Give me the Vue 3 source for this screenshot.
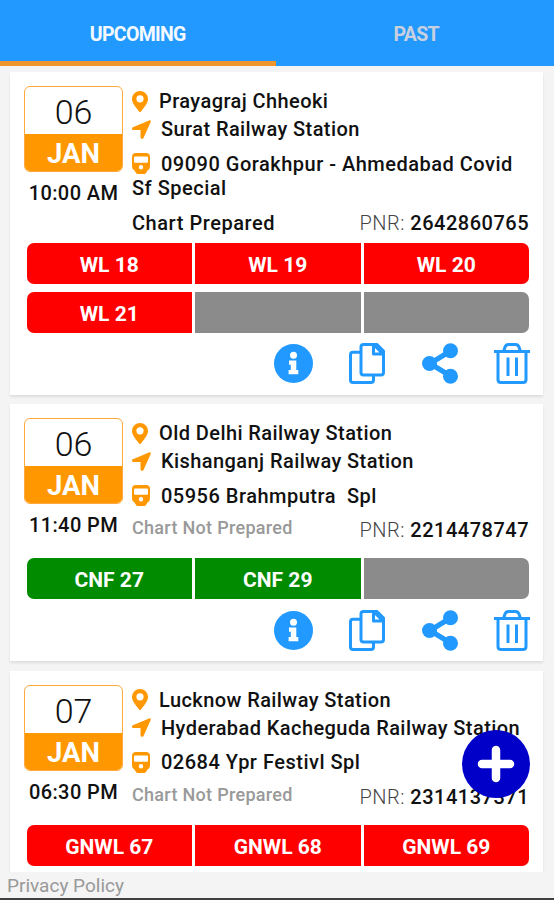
<script setup>
import { ref } from 'vue'

const activeTab = ref('upcoming')

const tabs = [
  { id: 'upcoming', label: 'UPCOMING' },
  { id: 'past', label: 'PAST' }
]

const trips = [
  {
    day: '06',
    month: 'JAN',
    time: '10:00 AM',
    from: 'Prayagraj Chheoki',
    to: 'Surat Railway Station',
    train: '09090 Gorakhpur - Ahmedabad Covid Sf Special',
    prepared: true,
    pnr: '2642860765',
    status: 'waiting',
    seats: ['WL 18', 'WL 19', 'WL 20', 'WL 21', '', '']
  },
  {
    day: '06',
    month: 'JAN',
    time: '11:40 PM',
    from: 'Old Delhi Railway Station',
    to: 'Kishanganj Railway Station',
    train: '05956 Brahmputra  Spl',
    prepared: false,
    pnr: '2214478747',
    status: 'confirmed',
    seats: ['CNF 27', 'CNF 29', '']
  },
  {
    day: '07',
    month: 'JAN',
    time: '06:30 PM',
    from: 'Lucknow Railway Station',
    to: 'Hyderabad Kacheguda Railway Station',
    train: '02684 Ypr Festivl Spl',
    prepared: false,
    pnr: '2314137371',
    status: 'waiting',
    seats: ['GNWL 67', 'GNWL 68', 'GNWL 69']
  }
]
</script>

<template>
  <div class="app">
    <nav class="tabs">
      <button
        v-for="tab in tabs"
        :key="tab.id"
        class="tab"
        :class="{ 'tab--active': tab.id === activeTab }"
        @click="activeTab = tab.id"
      >{{ tab.label }}</button>
    </nav>

    <main class="list">
      <article v-for="trip in trips" :key="trip.pnr" class="card">
        <div class="info">
          <div class="when">
            <div class="date">
              <div class="date__day">{{ trip.day }}</div>
              <div class="date__month">{{ trip.month }}</div>
            </div>
            <div class="time">{{ trip.time }}</div>
          </div>

          <div class="route">
            <div class="place">
              <svg class="pin" viewBox="0 0 16 21">
                <path fill-rule="evenodd" d="M8 0a8 8 0 0 1 8 8c0 3.500-2.300 6.200-7 12.500q-1 1-2 0C2.300 14.200 0 11.500 0 8a8 8 0 0 1 8-8zm0 4.200a3.600 3.600 0 1 0 0 7.200 3.600 3.600 0 0 0 0-7.200z" />
              </svg>
              <span>{{ trip.from }}</span>
            </div>
            <div class="place place--to">
              <svg class="arrow" viewBox="0 0 19 19">
                <path d="M17 .4.900 7.300C-.400 8-.200 9.900 1.300 10.100H8.500v7.200c.2 1.700 2.300 2 3 .6L18.700 2c.400-1.200-.5-2.100-1.700-1.600z" />
              </svg>
              <span>{{ trip.to }}</span>
            </div>
            <div class="train">
              <svg class="subway" viewBox="0 0 18 21">
                <path fill-rule="evenodd" d="M4 0h10q4 0 4 4v9.500q0 3-2.500 4l-1.500 2.500q-.6 1-1.800 1H5.800q-1.200 0-1.800-1l-1.500-2.500Q0 16.500 0 13.500V4q0-4 4-4zM3 3.500q-1 0-1 1v4.300q0 1 1 1h12q1 0 1-1V4.500q0-1-1-1zM9 12a2.200 2.200 0 1 0 0 4.400A2.200 2.200 0 0 0 9 12z" />
              </svg>
              <span class="train__name">{{ trip.train }}</span>
            </div>
            <div class="chart">
              <span v-if="trip.prepared" class="chart__done">Chart Prepared</span>
              <span v-else class="chart__pending">Chart Not Prepared</span>
              <span class="pnr"><span class="pnr__label">PNR: </span>{{ trip.pnr }}</span>
            </div>
          </div>
        </div>

        <div class="seats">
          <div
            v-for="(seat, i) in trip.seats"
            :key="i"
            class="seat"
            :class="seat ? `seat--${trip.status}` : 'seat--empty'"
          >{{ seat }}</div>
        </div>

        <div class="actions">
          <svg class="icon icon--info" viewBox="0 0 39 39">
            <circle cx="19.500" cy="19.500" r="19.500" />
            <circle class="icon__cut" cx="19.500" cy="11.300" r="3.500" />
            <path class="icon__cut" d="M15 16.500h7.300v9.500h2v4.200H14.600V26h2.200v-5.300H15z" />
          </svg>
          <svg class="icon icon--copy" viewBox="0 0 36 41">
            <path d="M11.500 9.300H4q-2.500 0-2.500 2.500v25.200q0 2.500 2.500 2.500h18q2.500 0 2.500-2.500v-4.500" />
            <path d="M14.500 1.500h13.500l6.500 6.500v21.500q0 2.500-2.500 2.500H14.500q-2.500 0-2.500-2.500V4q0-2.500 2.500-2.500z" />
            <path d="M24.500 1.500v9.500h10M25.500 2.500l8 8" />
          </svg>
          <svg class="icon icon--share" viewBox="0 0 36 41">
            <path d="M28.500 8 8 20.500 28.500 33" />
            <circle cx="28.500" cy="7.700" r="7.500" />
            <circle cx="7.500" cy="20.500" r="7.500" />
            <circle cx="28.500" cy="33.300" r="7.500" />
          </svg>
          <svg class="icon icon--trash" viewBox="0 0 36 41">
            <path d="M0 8.500h36M9.500 8.500l1.500-4.500q1-2.500 3.500-2.500h7q2.500 0 3.500 2.500l1.500 4.500M4 8.500v28q0 3 3 3h22q3 0 3-3v-28M14 14.500v18.500M22.500 14.500v18.500" />
          </svg>
        </div>
      </article>
    </main>

    <footer class="footer">Privacy Policy</footer>

    <button class="fab" aria-label="Add">
      <svg class="fab__icon" viewBox="0 0 38 38">
        <path d="M19 5v28M5 19h28" />
      </svg>
    </button>
  </div>
</template>

<style>
body {
  margin: 0;
}
</style>

<style scoped>
.app {
  position: relative;
  box-sizing: border-box;
  display: flex;
  flex-direction: column;
  height: 900px;
  overflow: hidden;
  background: #f4f4f4;
  border-bottom: 2px solid #404040;
  color: #111;
  font-family: Roboto, sans-serif;
  font-size: 20px;
  font-weight: 500;
}

.tabs {
  display: flex;
  flex: none;
  height: 66px;
  background: #2199ff;
}

.tab {
  flex: 1;
  padding: 8px 0 0 3px;
  border: none;
  border-bottom: 5px solid transparent;
  background: none;
  color: #c8d0e0;
  font-family: inherit;
  font-size: 19.500px;
  font-weight: 700;
  letter-spacing: -0.700px;
}

.tab--active {
  padding-left: 0;
  border-bottom-color: #ee962b;
  color: #f4f9ff;
}

.list {
  display: flex;
  flex-direction: column;
  gap: 9.500px;
  flex: none;
  box-sizing: border-box;
  height: 806px;
  padding: 6px 11px 0 10px;
  overflow: hidden;
}

.card {
  flex: none;
  padding: 14px 14px 0;
  background: #fff;
  box-shadow: 0 2px 2px #dedede;
}

.info {
  display: flex;
  gap: 9px;
  min-height: 140px;
}

.when {
  flex: none;
  width: 99px;
}

.date {
  box-sizing: border-box;
  height: 86px;
  overflow: hidden;
  border: 1.500px solid #ffa940;
  border-radius: 6px;
  background: #fff;
  text-align: center;
}

.date__day {
  height: 47px;
  font-size: 34px;
  font-weight: 300;
  line-height: 51px;
}

.date__month {
  height: 38px;
  background: #ff9800;
  color: #fff;
  font-size: 27.500px;
  font-weight: 700;
  line-height: 39px;
}

.time {
  margin-top: 9px;
  line-height: 24px;
  text-align: center;
  white-space: nowrap;
  letter-spacing: 0.400px;
}

.route {
  flex: 1;
  min-width: 0;
  padding: 1px 0 8px;
  letter-spacing: 0.420px;
}

.place {
  display: flex;
  align-items: center;
  gap: 11px;
  height: 28px;
  white-space: nowrap;
}

.place--to {
  gap: 10px;
}

.train {
  margin-top: 8.500px;
  line-height: 24.500px;
  letter-spacing: 0.500px;
}

.train__name {
  white-space: pre-wrap;
}

.pin,
.arrow,
.subway {
  flex: none;
  fill: #ff9800;
}

.pin {
  width: 16px;
  height: 21px;
}

.arrow {
  width: 19px;
  height: 19px;
}

.subway {
  width: 18px;
  height: 21px;
  margin-right: 11px;
  vertical-align: -3.500px;
}

.chart {
  display: flex;
  justify-content: space-between;
  height: 24px;
  margin-top: 10px;
  line-height: 24px;
}

.chart__done {
  letter-spacing: 0.550px;
}

.chart__pending {
  margin-top: -2px;
  color: #999;
  font-size: 18px;
  letter-spacing: 0.300px;
}

.pnr {
  letter-spacing: 0.500px;
}

.pnr__label {
  color: #444;
  font-weight: 300;
}

.seats {
  display: grid;
  grid-template-columns: repeat(3, 1fr);
  gap: 8px 3px;
  margin-left: 2.500px;
}

.seat {
  height: 41px;
  color: #fff;
  font-size: 21px;
  font-weight: 700;
  line-height: 44px;
  text-align: center;
}

.seat:nth-child(3n + 1) {
  border-radius: 7px 0 0 7px;
}

.seat:nth-child(3n) {
  border-radius: 0 7px 7px 0;
}

.seat--waiting {
  background: #f00;
}

.seat--confirmed {
  background: #008b00;
}

.seat--empty {
  background: #8b8b8b;
}

.actions {
  display: flex;
  align-items: center;
  justify-content: flex-end;
  gap: 36.500px;
  height: 62px;
  margin-right: -1px;
}

.icon {
  width: 36px;
  height: 41px;
  fill: none;
  stroke: #2199ff;
  stroke-width: 3;
  stroke-linejoin: round;
}

.icon--info {
  width: 39px;
  height: 39px;
  fill: #2199ff;
  stroke: none;
}

.icon__cut {
  fill: #fff;
}

.icon--share {
  stroke-width: 5;
}

.icon--share circle {
  fill: #2199ff;
  stroke: none;
}

.footer {
  padding: 2px 7px 0;
  color: #999;
  font-size: 19px;
  font-weight: 400;
  line-height: 24px;
}

.fab {
  position: absolute;
  right: 24px;
  bottom: 100px;
  display: grid;
  place-items: center;
  width: 68px;
  height: 68px;
  padding: 0;
  border: none;
  border-radius: 50%;
  background: #0000c8;
}

.fab__icon {
  width: 38px;
  height: 38px;
  stroke: #fff;
  stroke-width: 8.500;
  stroke-linecap: round;
}
</style>
